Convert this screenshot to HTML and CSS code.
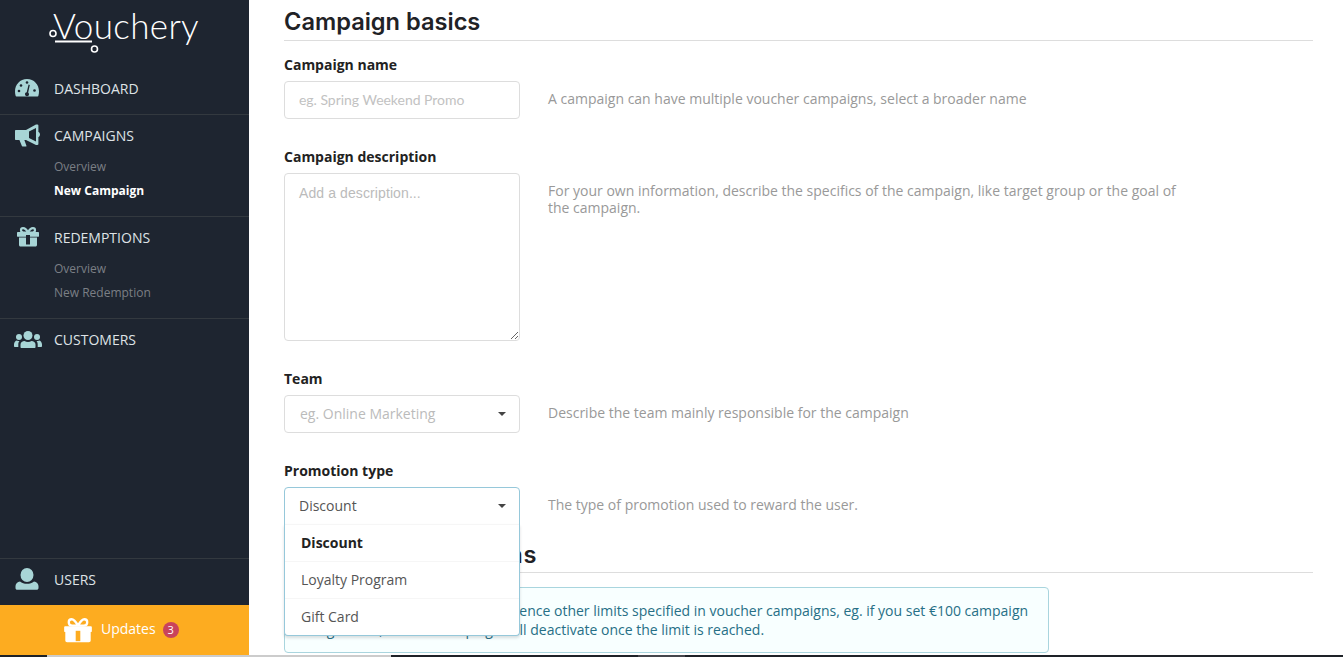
FILE: index.html
```html
<!DOCTYPE html>
<html lang="en">
<head>
<meta charset="utf-8">
<title>Vouchery</title>
<link rel="stylesheet" href="styles.css">
</head>
<body>
<div class="app">
  <aside class="sidebar">
    <div class="logo">
      <span class="logo-text">Vouchery</span>
      <svg class="logo-cart" width="60" height="52" viewBox="0 0 60 52" fill="none" stroke="#fff">
        <circle cx="4" cy="31.500" r="3" stroke-width="1.600"/>
        <path d="M6 39.500h37" stroke-width="2"/>
        <circle cx="45.500" cy="47" r="3" stroke-width="1.600"/>
      </svg>
    </div>
    <nav class="menu">
      <section class="menu-group g-dash">
        <a class="menu-head">
          <svg class="ico" width="26" height="20" viewBox="0 0 26 20"><path fill="#a8d5d6" d="M13 1C6 1 1 6.500 1 13.500c0 1.500.2 3 .7 4.500.1.300.4.500.7.500h21.200c.3 0 .6-.2.700-.5.500-1.500.7-3 .7-4.500C25 6.500 20 1 13 1z"/><circle cx="5" cy="13" r="1.300" fill="#1e2530"/><circle cx="7" cy="7.500" r="1.300" fill="#1e2530"/><circle cx="13" cy="4.500" r="1.300" fill="#1e2530"/><circle cx="20.500" cy="12.500" r="1.300" fill="#1e2530"/><path fill="#1e2530" d="M14.600 6.500l1.200.4-1.600 7.600c.6.500.9 1.200.8 2-.1 1-1 1.900-2.200 1.700-1.100-.1-1.900-1-1.800-2.100.1-1 .8-1.700 1.700-1.800z"/></svg>
          <span>DASHBOARD</span>
        </a>
      </section>
      <section class="menu-group g-camp">
        <a class="menu-head">
          <svg class="ico" width="26" height="23" viewBox="0 0 26 23"><path fill="#a8d5d6" d="M2 6h10L21.500.8c.3-.2.700-.3 1-.3h1c.5 0 .9.400.9.900V8c1 .3 1.600 1.300 1.600 2.500s-.6 2.200-1.600 2.500v7.100c0 .5-.4.900-.9.900h-1c-.3 0-.7-.1-1-.3L12 16H2c-.6 0-1-.4-1-1V7c0-.6.400-1 1-1z"/><path fill="#a8d5d6" d="M5 15h5l2.500 7c.1.300-.1.500-.4.500H8.500c-.3 0-.5-.1-.6-.4z"/><path fill="#1e2530" d="M15 7.500L22 4v13.500L15 14z"/></svg>
          <span>CAMPAIGNS</span>
        </a>
        <a class="menu-sub">Overview</a>
        <a class="menu-sub active">New Campaign</a>
      </section>
      <section class="menu-group g-red">
        <a class="menu-head">
          <svg class="ico gift" width="22" height="20" viewBox="0 0 22 20"><path fill="#a8d5d6" d="M1 5h20c.6 0 1 .4 1 1v3.200c0 .3-.2.500-.5.500H.5c-.3 0-.5-.2-.5-.5V6c0-.6.400-1 1-1zM2 10.500h18V18c0 .8-.7 1.500-1.500 1.500h-15C2.700 19.500 2 18.800 2 18z"/><path fill="none" stroke="#a8d5d6" stroke-width="2.200" d="M11 5.500C9.500 2.500 7.500 1.200 6 1.200 4.700 1.200 4 2.200 4 3.300 4 4.800 5.200 5.500 6.500 5.500zM11 5.500c1.500-3 3.500-4.300 5-4.300 1.300 0 2 1 2 2.100 0 1.500-1.200 2.200-2.500 2.200z"/><path fill="#1e2530" d="M9 8h4v9.500H9z"/></svg>
          <span>REDEMPTIONS</span>
        </a>
        <a class="menu-sub">Overview</a>
        <a class="menu-sub">New Redemption</a>
      </section>
      <section class="menu-group g-cust">
        <a class="menu-head">
          <svg class="ico" width="28" height="17" viewBox="0 0 28 17"><g fill="#a8d5d6"><circle cx="14" cy="4.500" r="4.500"/><circle cx="5" cy="6" r="3"/><circle cx="23" cy="6" r="3"/><path d="M7.500 17c-.6 0-1-.4-1-1v-2.500c0-2 2-3.500 4-3.500 1 .7 2.200 1 3.500 1s2.500-.3 3.500-1c2 0 4 1.500 4 3.500V16c0 .6-.4 1-1 1z"/><path d="M5.500 10c-.8.900-1.200 2.200-1.200 3.500V16H1c-.6 0-1-.4-1-1v-1.500C0 11.500 1.500 9.500 3 9.500c.7.500 1.600.7 2.500.5zM22.500 10c.8.900 1.200 2.200 1.200 3.500V16H27c.6 0 1-.4 1-1v-1.500c0-2-1.500-4-3-4-.7.500-1.600.7-2.500.5z"/></g></svg>
          <span>CUSTOMERS</span>
        </a>
      </section>
    </nav>
    <section class="menu-group g-users">
      <a class="menu-head">
        <svg class="ico" width="26" height="22" viewBox="0 0 26 22"><g fill="#a8d5d6"><ellipse cx="13" cy="7" rx="6.500" ry="7"/><path d="M6 13.500c1.800 1.500 4.300 2.300 7 2.300s5.200-.8 7-2.300c2.500.5 4.500 2.300 4.500 4.500v2c0 1-.8 1.800-1.800 1.800H3.300c-1 0-1.800-.8-1.800-1.800v-2c0-2.200 2-4 4.500-4.500z"/></g></svg>
        <span>USERS</span>
      </a>
    </section>
    <a class="updates">
      <svg width="30" height="25" viewBox="0 0 26 21.500"><path fill="#fff" d="M2 7h22c.6 0 1 .4 1 1v3.500c0 .3-.2.500-.5.500H24v7.500c0 .8-.7 1.500-1.500 1.500h-19C2.700 21 2 20.300 2 19.500V12h-.5c-.3 0-.5-.2-.5-.5V8c0-.6.400-1 1-1z"/><path fill="none" stroke="#fff" stroke-width="2" d="M13 6.500C11 3 9 1 7.500 1 6 1 5 2 5 3.500 5 5.500 6.500 6.500 8 6.500zM13 6.500c2-3.500 4-5.500 5.500-5.500C20 1 21 2 21 3.500c0 2-1.500 3-3 3z"/><path fill="#fdac20" d="M11 11h4v9h-4z"/></svg>
      <span class="updates-label">Updates</span>
      <span class="badge">3</span>
    </a>
  </aside>
  <main class="content">
    <h2 class="section-title first">Campaign basics</h2>
    <div class="field f-name">
      <label class="field-label">Campaign name</label>
      <div class="field-row">
        <div class="control"><input class="input" type="text" placeholder="eg. Spring Weekend Promo"></div>
        <p class="hint">A campaign can have multiple voucher campaigns, select a broader name</p>
      </div>
    </div>
    <div class="field f-desc">
      <label class="field-label">Campaign description</label>
      <div class="field-row row-top">
        <div class="control"><textarea class="textarea" placeholder="Add a description..."></textarea></div>
        <p class="hint hint-top">For your own information, describe the specifics of the campaign, like target group or the goal of the campaign.</p>
      </div>
    </div>
    <div class="field f-team">
      <label class="field-label">Team</label>
      <div class="field-row">
        <div class="control"><div class="select placeholder"><span>eg. Online Marketing</span><i class="caret"></i></div></div>
        <p class="hint">Describe the team mainly responsible for the campaign</p>
      </div>
    </div>
    <div class="field f-promo">
      <label class="field-label">Promotion type</label>
      <div class="field-row">
        <div class="control">
          <div class="select open"><span>Discount</span><i class="caret"></i></div>
          <ul class="dropdown">
            <li class="selected">Discount</li>
            <li>Loyalty Program</li>
            <li>Gift Card</li>
          </ul>
        </div>
        <p class="hint">The type of promotion used to reward the user.</p>
      </div>
    </div>
    <h2 class="section-title second">Campaign limitations</h2>
    <div class="notice">Campaign limits will strongly influence other limits specified in voucher campaigns, eg. if you set €100 campaign budget limit, this full campaign will deactivate once the limit is reached.</div>
  </main>
</div>
<div class="taskbar"><span class="tb-black a"></span><span class="tb-light b"></span><span class="tb-black c"></span><span class="tb-mid"></span><span class="tb-black d"></span></div>
</body>
</html>
```

FILE: styles.css
```css
* { box-sizing: border-box; }
html, body { margin: 0; height: 100%; overflow: hidden; background: #fff; }
body { font-family: "Open Sans", "Liberation Sans", sans-serif; font-size: 14px; color: #222; }

.app { display: flex; height: 655px; }

.sidebar { width: 249px; flex: none; background: #1e2530; display: flex; flex-direction: column; position: relative; }
.logo { height: 67px; position: relative; }
.logo-text { position: absolute; left: 53px; top: 3px; font-family: "Lato", sans-serif; font-weight: 300; font-size: 35px; line-height: 44px; color: #fff; letter-spacing: 0.35px; }
.logo-cart { position: absolute; left: 49px; top: 2px; }

.menu { flex: 1; }
.menu-group { border-bottom: 1px solid #33393f; }
.menu-head { display: flex; align-items: center; height: 40px; padding-left: 14px; color: #dfe3e6; font-size: 14px; }
.menu-head span { position: absolute; left: 54px; }
.ico { flex: none; }
.gift { margin-left: 3px; }
.menu-sub { display: block; height: 24px; line-height: 24px; padding-left: 54px; font-size: 12px; color: #7b7f85; }
.menu-sub.active { color: #fff; font-weight: 700; }
.g-dash { height: 48px; }
.g-dash .menu-head { height: 42px; }
.g-camp { height: 102px; }
.g-red { height: 102px; }
.g-cust { border-bottom: none; }
.g-users { border-top: 1px solid #33393f; border-bottom: none; height: 47px; }

.updates { height: 50px; background: #fdac20; color: #fff; display: flex; align-items: center; padding-left: 63px; }
.updates-label { margin-left: 8px; margin-bottom: 4px; font-size: 14px; }
.badge { margin-left: 7px; width: 16px; height: 16px; border-radius: 50%; background: #c9435c; color: #fff; font-size: 11px; line-height: 16px; text-align: center; }

.content { flex: 1; min-width: 0; padding: 0 30px 0 35px; position: relative; }
.section-title { margin: 0; font-family: "Inter", sans-serif; font-weight: 600; font-size: 23.6px; line-height: 28px; color: #1f2226; border-bottom: 1px solid #ddd; }
.section-title.first { padding-top: 8px; padding-bottom: 4px; }
.section-title.second { padding-bottom: 3px; margin-top: 16px; letter-spacing: 0.65px; }

.field-label { display: block; font-weight: 700; font-size: 14px; line-height: 20px; color: #222; }
.field-row { display: flex; align-items: center; margin-top: 6px; }
.row-top { align-items: flex-start; }
.control { width: 236px; flex: none; position: relative; }
.hint { margin: 0 0 0 28px; padding-bottom: 4px; max-width: 640px; font-size: 14px; line-height: 17px; color: #999; }
.hint-top { margin-top: 9px; }
.f-name { margin-top: 14px; }
.f-desc { margin-top: 28px; }
.f-team { margin-top: 28px; }
.f-promo { margin-top: 28px; }

.input, .textarea, .select { display: block; width: 236px; border: 1px solid #ddd; border-radius: 4px; background: #fff; outline: none; }
.input { height: 38px; padding: 0 14px 2px; font-family: "Lato", sans-serif; font-size: 14px; letter-spacing: -0.03px; }
.textarea { height: 168px; padding: 11px 14px; font-family: "Liberation Sans", sans-serif; font-size: 14px; letter-spacing: 0.1px; resize: vertical; }
.input::placeholder { color: #c2c2c2; opacity: 1; }
.textarea::placeholder { color: #bbb; opacity: 1; }
.select { height: 38px; padding: 0 14px 2px; display: flex; align-items: center; justify-content: space-between; font-size: 14px; color: #555; }
.select.placeholder { color: #bbb; padding-left: 15px; }
.select.open { border-color: #96c8da; border-radius: 4px 4px 0 0; }
.caret { width: 0; height: 0; border-left: 4px solid transparent; border-right: 4px solid transparent; border-top: 4px solid #444; margin-right: -1px; margin-top: 2px; }

.dropdown { position: absolute; left: 0; top: 37px; width: 236px; margin: 0; padding: 0; list-style: none; background: #fff; border: 1px solid #96c8da; border-top: none; border-radius: 0 0 4px 4px; box-shadow: 0 2px 3px rgba(34,36,38,.15); z-index: 2; }
.dropdown li { height: 37px; line-height: 36px; padding-left: 16px; color: #555; border-top: 1px solid #f6f6f6; font-size: 14px; }
.dropdown li.selected { color: #222; font-weight: 700; }

.notice { margin-top: 14px; width: 765px; height: 66px; padding: 13px 8px 0 16px; border: 1px solid #a9d5de; border-radius: 4px; background: #f8ffff; color: #276f86; font-size: 14px; line-height: 19px; }

.taskbar { height: 2px; display: flex; }
.tb-black { display: block; height: 2px; background: #1e2228; }
.tb-black.a { width: 47px; }
.tb-light { display: block; width: 344px; height: 2px; background: #ccc; }
.tb-black.c { width: 247px; }
.tb-mid { display: block; width: 47px; height: 2px; background: #45464c; }
.tb-black.d { flex: 1; }
```
